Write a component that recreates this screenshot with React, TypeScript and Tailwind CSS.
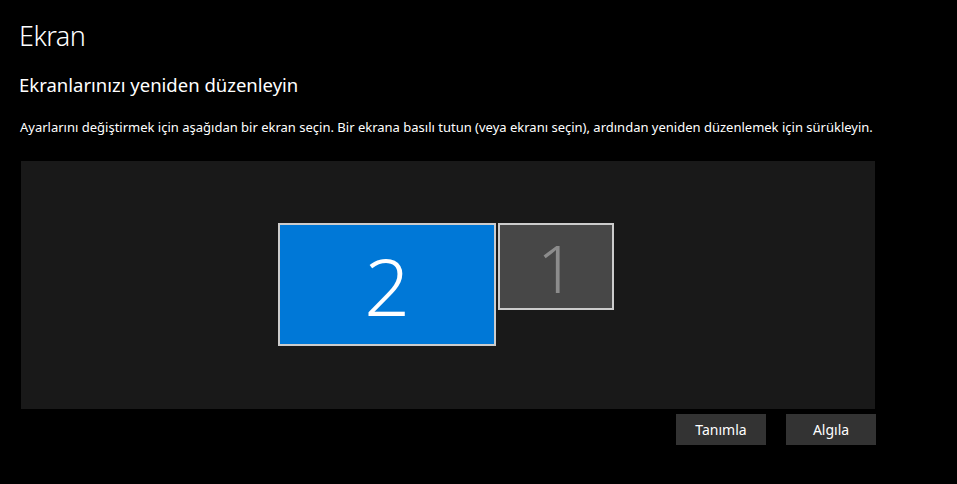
import React from "react";

export default function App() {
  const font = { fontFamily: '"Segoe UI", "Noto Sans", "Open Sans", sans-serif' };
  return (
    <div className="w-[957px] h-[484px] bg-black text-white overflow-hidden" style={font}>
      <div className="pl-[19px] pt-[18px]">
        <h1 className="text-[27px] leading-[36px] font-light tracking-[-0.5px]">Ekran</h1>
        <h2 className="mt-[18px] text-[18.5px] leading-[26px]">Ekranlarınızı yeniden düzenleyin</h2>
        <p className="mt-[20px] pl-[1px] text-[13px] leading-[18px]">
          Ayarlarını değiştirmek için aşağıdan bir ekran seçin. Bir ekrana basılı tutun (veya ekranı seçin), ardından yeniden düzenlemek için sürükleyin.
        </p>
      </div>
      <div className="ml-[21px] mt-[25px] w-[854px] h-[248px] bg-[#191919] relative">
        <div className="absolute left-[257px] top-[62px] w-[218px] h-[123px] bg-[#0078d7] border-2 border-[#cccccc] flex items-center justify-center">
          <span className="text-[80px] leading-none font-light text-white">2</span>
        </div>
        <div className="absolute left-[477px] top-[62px] w-[116px] h-[87px] bg-[#474747] border-2 border-[#cccccc] flex items-center justify-center">
          <span className="text-[66px] leading-none font-light text-[#8c8c8c]">1</span>
        </div>
      </div>
      <div className="ml-[21px] w-[855px] mt-[5px] flex justify-end gap-[20px]">
        <button className="w-[90px] h-[31px] bg-[#333333] text-[14px] text-white">Tanımla</button>
        <button className="w-[90px] h-[31px] bg-[#333333] text-[14px] text-white">Algıla</button>
      </div>
    </div>
  );
}
